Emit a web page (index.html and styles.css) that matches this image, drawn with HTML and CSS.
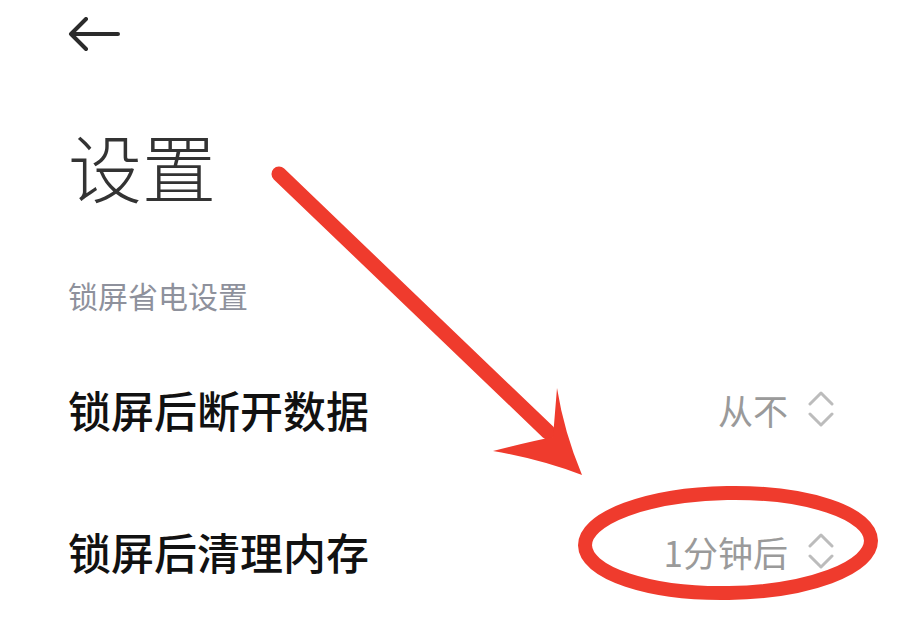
FILE: index.html
```html
<!doctype html>
<html lang="zh-CN">
<head>
    <meta charset="UTF-8">
    <meta name="viewport" content="width=device-width, initial-scale=1.0">
    <title>设置</title>
    <link rel="stylesheet" href="styles.css">
</head>
<body>
    <div class="page">
        <div class="header">
            <svg class="back" width="52" height="36" viewBox="0 0 52 36">
                <path d="M3 17 H50 M18 2 L3 17 L18 32" fill="none" stroke="#2b2b2b" stroke-width="4" stroke-linecap="round" stroke-linejoin="round"/>
            </svg>
        </div>
        <h1 class="title">设置</h1>
        <div class="section-label">锁屏省电设置</div>
        <div class="row">
            <span class="row-title">锁屏后断开数据</span>
            <span class="row-value">从不
                <svg class="updown" width="26" height="38" viewBox="0 0 26 38">
                    <path d="M2 14 L13 3 L24 14 M2 24 L13 35 L24 24" fill="none" stroke="#bcbcbc" stroke-width="3" stroke-linecap="round" stroke-linejoin="round"/>
                </svg>
            </span>
        </div>
        <div class="row">
            <span class="row-title">锁屏后清理内存</span>
            <span class="row-value">1分钟后
                <svg class="updown" width="26" height="38" viewBox="0 0 26 38">
                    <path d="M2 14 L13 3 L24 14 M2 24 L13 35 L24 24" fill="none" stroke="#bcbcbc" stroke-width="3" stroke-linecap="round" stroke-linejoin="round"/>
                </svg>
            </span>
        </div>
    </div>

    <!-- красная разметка поверх скриншота -->
    <svg class="marks" width="900" height="642" viewBox="0 0 900 642">
        <line x1="279" y1="174" x2="548" y2="432" stroke="#ef3b2d" stroke-width="15" stroke-linecap="round"/>
        <path d="M557 388 Q564 432 582 475 Q540 459 493 451 Q528 442 553 437 Z" fill="#ef3b2d"/>
        <ellipse cx="728" cy="543" rx="143" ry="50" fill="none" stroke="#ef3b2d" stroke-width="14" transform="rotate(-1 728 543)"/>
    </svg>
</body>
</html>
```

FILE: styles.css
```css
body {
    margin: 0;
    background-color: #ffffff;
    font-family: "Noto Sans CJK SC", "Noto Sans", sans-serif;
}

.page {
    padding: 0 66px 0 68px;
}

.header {
    height: 68px;
    display: flex;
    align-items: center;
}

.back {
    display: block;
    margin-top: 1px;
}

.title {
    margin: 60px 0 0;
    font-size: 74px;
    line-height: 74px;
    font-weight: 300;
    color: #333333;
}

.section-label {
    margin-top: 78px;
    font-size: 30px;
    line-height: 30px;
    color: #8e919c;
}

.row {
    height: 142px;
    display: flex;
    align-items: center;
    justify-content: space-between;
}

.section-label + .row {
    margin-top: 28px;
}

.row-title {
    font-size: 43px;
    font-weight: 500;
    color: #111111;
}

.row-value {
    display: flex;
    align-items: center;
    gap: 20px;
    font-size: 35px;
    color: #9a9a9a;
}

.updown {
    display: block;
}

.marks {
    position: absolute;
    top: 0;
    left: 0;
    pointer-events: none;
}
```
